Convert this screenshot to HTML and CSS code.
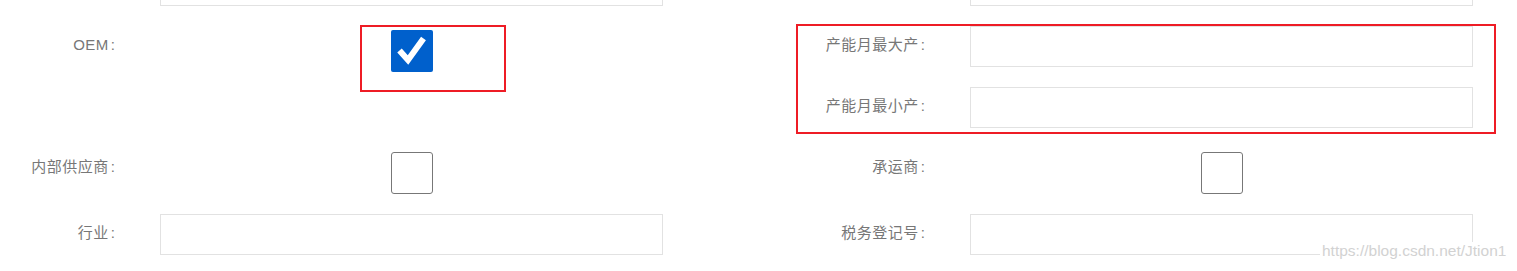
FILE: index.html
```html
<!DOCTYPE html>
<html lang="zh-CN">
<head>
<meta charset="utf-8">
<title>表单</title>
<link rel="stylesheet" href="styles.css">
</head>
<body>
<div class="page">
  <div class="form">
    <div class="item">
      <span class="label"></span>
      <input class="field" type="text">
    </div>
    <div class="item">
      <span class="label"></span>
      <input class="field" type="text">
    </div>

    <div class="item item-span">
      <span class="label">OEM<span class="colon">:</span></span>
      <div class="check-wrap">
        <span class="checkbox checked">
          <svg width="42" height="42" viewBox="0 0 42 42"><polyline points="8.5,20.5 17,30 32.5,8.5" fill="none" stroke="#fff" stroke-width="6" stroke-linejoin="miter"/></svg>
        </span>
      </div>
    </div>
    <div class="item">
      <span class="label">产能月最大产<span class="colon">:</span></span>
      <input class="field" type="text">
    </div>
    <div class="item">
      <span class="label">产能月最小产<span class="colon">:</span></span>
      <input class="field" type="text">
    </div>

    <div class="item">
      <span class="label">内部供应商<span class="colon">:</span></span>
      <div class="check-wrap"><span class="checkbox"></span></div>
    </div>
    <div class="item">
      <span class="label">承运商<span class="colon">:</span></span>
      <div class="check-wrap"><span class="checkbox"></span></div>
    </div>

    <div class="item">
      <span class="label">行业<span class="colon">:</span></span>
      <input class="field" type="text">
    </div>
    <div class="item">
      <span class="label">税务登记号<span class="colon">:</span></span>
      <input class="field" type="text">
    </div>
  </div>

  <div class="mark mark-oem"></div>
  <div class="mark mark-capacity"></div>
  <div class="watermark">https://blog.csdn.net/Jtion1</div>
</div>
</body>
</html>
```
FILE: styles.css
```css
html, body {
  margin: 0;
  padding: 0;
  background: #fff;
}
body {
  width: 1517px;
  height: 271px;
  overflow: hidden;
  font-family: "Liberation Sans", "Noto Sans CJK SC", sans-serif;
  font-size: 15px;
  color: #777;
}
.page {
  position: relative;
  width: 1517px;
  height: 271px;
  overflow: hidden;
}
.form {
  display: grid;
  grid-template-columns: 810px 663px;
  row-gap: 20px;
  margin-top: -35px;
}
.item {
  display: flex;
  align-items: flex-start;
  gap: 45px;
}
.item-span {
  grid-row: span 2;
}
.label {
  width: 115px;
  flex: none;
  text-align: right;
  line-height: 38px;
  white-space: nowrap;
  letter-spacing: 0.5px;
}
.colon {
  margin-left: 2px;
  letter-spacing: 0;
}
.field {
  display: block;
  width: 503px;
  height: 41px;
  box-sizing: border-box;
  margin: 0;
  padding: 0 10px;
  border: 1px solid #e2e2e2;
  border-radius: 0;
  background: #fff;
  outline: none;
}
.check-wrap {
  width: 503px;
  display: flex;
  justify-content: center;
  padding-top: 4px;
}
.checkbox {
  display: block;
  width: 42px;
  height: 42px;
  box-sizing: border-box;
  border: 1px solid #777;
  border-radius: 3px;
  background: #fff;
}
.checkbox.checked {
  border: none;
  border-radius: 2px;
  background: #0060cc;
}
.checkbox svg {
  display: block;
}
.mark {
  position: absolute;
  border: 2px solid #ee1c25;
  box-sizing: border-box;
}
.mark-oem {
  left: 360px;
  top: 25px;
  width: 146px;
  height: 67px;
}
.mark-capacity {
  left: 796px;
  top: 24px;
  width: 700px;
  height: 110px;
}
.watermark {
  position: absolute;
  left: 1320px;
  top: 242px;
  padding-left: 2px;
  width: 197px;
  height: 29px;
  background: #fff;
  color: #d2d2d2;
  font-size: 15.5px;
  line-height: 18px;
  white-space: nowrap;
}
```
